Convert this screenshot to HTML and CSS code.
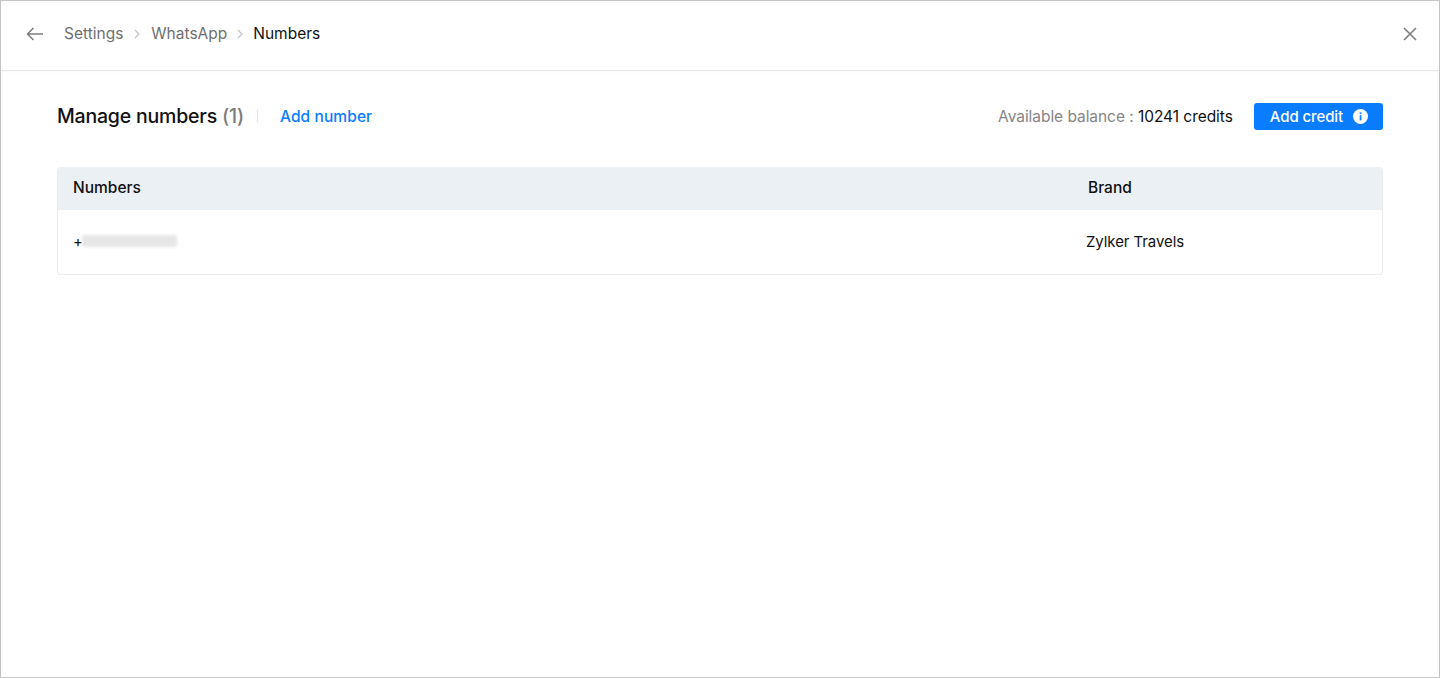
FILE: index.html
```html
<!DOCTYPE html>
<html lang="en">
<head>
  <meta charset="UTF-8">
  <title>Manage numbers</title>
  <link rel="stylesheet" href="styles.css">
</head>
<body>
  <div class="window">

    <div class="top-bar">
      <svg class="back-icon" width="18" height="14" viewBox="0 0 18 14" fill="none">
        <path d="M17 7H1.5M7.5 1L1.5 7l6 6" stroke="#7d7d7d" stroke-width="1.5"/>
      </svg>
      <a href="#" class="crumb">Settings</a>
      <svg class="crumb-sep first" width="6" height="10" viewBox="0 0 6 10" fill="none">
        <path d="M1 1l4 4-4 4" stroke="#c2c2c2" stroke-width="1.2"/>
      </svg>
      <a href="#" class="crumb">WhatsApp</a>
      <svg class="crumb-sep" width="6" height="10" viewBox="0 0 6 10" fill="none">
        <path d="M1 1l4 4-4 4" stroke="#c2c2c2" stroke-width="1.2"/>
      </svg>
      <span class="crumb current">Numbers</span>
      <svg class="close-icon" width="14" height="14" viewBox="0 0 14 14" fill="none">
        <path d="M1 1l12 12M13 1L1 13" stroke="#7d7d7d" stroke-width="1.6"/>
      </svg>
    </div>

    <div class="content">
      <div class="head-row">
        <h1>Manage numbers <span class="count">(1)</span></h1>
        <span class="divider"></span>
        <a href="#" class="add-number">Add number</a>
        <div class="balance">
          <span class="balance-label">Available balance :</span>
          <span class="balance-value">10241 credits</span>
        </div>
        <button class="add-credit">
          Add credit
          <svg width="15" height="15" viewBox="0 0 15 15">
            <circle cx="7.5" cy="7.5" r="7.5" fill="#fff"/>
            <rect x="6.7" y="3.3" width="1.7" height="1.7" fill="#0a7cff"/>
            <rect x="6.7" y="6.2" width="1.7" height="5.2" fill="#0a7cff"/>
          </svg>
        </button>
      </div>

      <div class="numbers-table">
        <div class="table-head">
          <div class="col-number">Numbers</div>
          <div class="col-brand">Brand</div>
        </div>
        <div class="table-row">
          <div class="col-number">+<span class="masked"></span></div>
          <div class="col-brand brand-cell">Zylker Travels</div>
        </div>
      </div>
    </div>

  </div>
</body>
</html>
```

FILE: styles.css
```css
* {
  box-sizing: border-box;
}
html, body {
  height: 100%;
}
body {
  margin: 0;
  font-family: Inter, "Noto Sans", sans-serif;
  font-size: 15.5px;
  color: #111;
  background: #fff;
}
a {
  text-decoration: none;
}
.window {
  height: 100%;
  border: 1px solid #c6c6c6;
  background: #fff;
}
.top-bar {
  display: flex;
  align-items: center;
  height: 70px;
  padding: 0 22px 4px 25px;
  border-bottom: 1px solid #e8e8e8;
  box-shadow: 0 1px 2px rgba(0, 0, 0, 0.03);
}
.back-icon {
  margin-right: 20px;
}
.crumb {
  color: #6f6f6f;
}
.crumb.current {
  color: #111;
}
.crumb-sep {
  margin: 0 10px;
}
.crumb-sep.first {
  margin: 0 11px;
}
.close-icon {
  margin-left: auto;
}
.content {
  padding: 31px 56px 0;
}
.head-row {
  display: flex;
  align-items: center;
  height: 28px;
}
h1 {
  margin: 0;
  font-size: 19.5px;
  font-weight: 500;
  letter-spacing: -0.2px;
}
.count {
  color: #7d7d7d;
}
.divider {
  width: 1px;
  height: 12px;
  margin: 0 22px 0 13px;
  background: #e6e6e6;
}
.add-number {
  color: #0a7cff;
  font-weight: 500;
  letter-spacing: 0.1px;
}
.balance {
  margin-left: auto;
  letter-spacing: -0.05px;
}
.balance-label {
  color: #858585;
}
.add-credit {
  display: flex;
  align-items: center;
  gap: 10px;
  height: 27px;
  margin-left: 21px;
  padding: 0 15px 0 16px;
  border: 0;
  border-radius: 3px;
  background: #0a7cff;
  color: #fff;
  font: 500 15px Inter, "Noto Sans", sans-serif;
  letter-spacing: -0.1px;
}
.numbers-table {
  margin-top: 37px;
  border: 1px solid #ecedef;
  border-top: 0;
  border-radius: 4px;
  overflow: hidden;
}
.table-head, .table-row {
  display: flex;
  align-items: center;
}
.table-head {
  height: 43px;
  margin: 0 -1px;
  padding-bottom: 2px;
  background: #ebf0f5;
  font-weight: 500;
}
.table-head .col-number {
  padding-left: 16px;
}
.table-row {
  height: 64px;
  padding-bottom: 2px;
  font-size: 15px;
}
.col-number {
  flex: 0 0 1031px;
  padding-left: 15px;
  display: flex;
  align-items: center;
}
.col-brand {
  flex: 1;
}
.brand-cell {
  margin-left: -3px;
  letter-spacing: -0.08px;
}
.masked {
  display: inline-block;
  width: 95px;
  height: 12px;
  margin-left: -1px;
  background: #e6e6e6;
  border-radius: 2px;
  filter: blur(1.5px);
}
```
